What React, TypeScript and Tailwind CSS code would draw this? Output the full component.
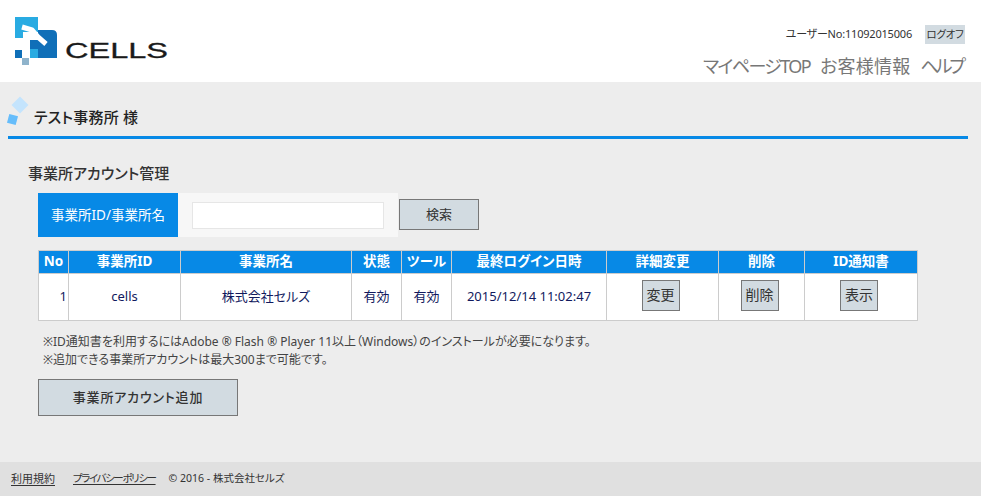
const jp = "font-['Noto_Sans','Noto_Sans_CJK_JP',sans-serif] [font-feature-settings:'palt']";

const columns = [
  { label: "No", width: "w-[30px]" },
  { label: "事業所ID", width: "w-[112px]" },
  { label: "事業所名", width: "w-[171px]" },
  { label: "状態", width: "w-[50px]" },
  { label: "ツール", width: "w-[50px]" },
  { label: "最終ログイン日時", width: "w-[155px]" },
  { label: "詳細変更", width: "w-[112px]" },
  { label: "削除", width: "w-[86px]" },
  { label: "ID通知書", width: "w-[113px]" },
];

function Logo() {
  return (
    <svg width="160" height="56" viewBox="0 0 160 56" className="block">
      <path d="M5 5H28V20H13V26H5Z" fill="#29abe2" />
      <path d="M28 18H42Q47 18 47 23V46H28Z" fill="#0f6fb8" />
      <path d="M20 28H28V37H20Z" fill="#0f6fb8" />
      <path d="M20 37H28V46H20Z" fill="#29abe2" />
      <path d="M5 38H12V46H5Z" fill="#0f6fb8" />
      <path d="M12 46H19V53H12Z" fill="#8fb3cb" />
      <path d="M12 15L22 18L28 25L36 32" fill="none" stroke="#fff" strokeWidth="5" strokeLinejoin="round" />
      <text
        x="55"
        y="46"
        textLength="103"
        lengthAdjust="spacingAndGlyphs"
        fontFamily="'Liberation Sans', sans-serif"
        fontSize="22"
        fill="#1a1a1a"
        stroke="#1a1a1a"
        strokeWidth="0.3"
      >
        CELLS
      </text>
    </svg>
  );
}

function SmallButton({ label }: { label: string }) {
  return (
    <button className="align-middle mr-[4px] mb-[4px] w-[38px] h-[31px] bg-[#d2dbe1] border border-[#777] text-[14px] text-[#333] leading-none">
      {label}
    </button>
  );
}

export default function App() {
  return (
    <div className={`${jp} w-[981px] h-[496px] flex flex-col bg-[#ededed] text-[#333] overflow-hidden`}>
      <header className="h-[82px] bg-white flex justify-between">
        <div className="pl-[10px] pt-[12px]">
          <Logo />
        </div>
        <div className="flex flex-col items-end pr-[16px] pt-[24px]">
          <div className="flex items-center gap-[13px] text-[11px] text-[#333] h-[20px]">
            <span className="tracking-[-0.2px]">ユーザーNo:11092015006</span>
            <button className="h-[19px] w-[40px] bg-[#d2dbe1] text-[10.5px] text-[#333] leading-none tracking-[-0.2px]">ログオフ</button>
          </div>
          <nav className="flex gap-[10px] mt-[9px] mr-[2px] text-[18px] leading-[26px] text-[#777]">
            <span className="tracking-[-1.6px]">マイページTOP</span>
            <span className="tracking-[0.2px]">お客様情報</span>
            <span className="tracking-[-3px]">ヘルプ</span>
          </nav>
        </div>
      </header>

      <main className="flex-1 px-[8px]">
        <div className="relative h-[57px] w-[960px] border-b-[3px] border-[#0789e6]">
          <span className="absolute left-[6px] top-[17px] w-[12px] h-[12px] rotate-45 bg-[#c4e4fd]" />
          <span className="absolute left-[0px] top-[33px] w-[9px] h-[9px] rotate-[15deg] bg-[#66bdfb]" />
          <h1 className="pl-[26px] pt-[24px] text-[15px] leading-[22px] font-medium text-[#222] tracking-[0.2px]">テスト事務所 様</h1>
        </div>

        <div className="pl-[20px] pt-[23px]">
          <h2 className="text-[15px] leading-[22px] font-medium text-[#333]">事業所アカウント管理</h2>

          <div className="ml-[10px] mt-[9px] flex items-start">
            <div className="flex h-[44px] w-[360px] bg-[#f7f7f7]">
              <div className="w-[140px] flex items-center justify-center bg-[#0789e6] text-white text-[13.5px]">
                事業所ID/事業所名
              </div>
              <div className="flex-1 flex items-center pl-[14px]">
                <input className="w-[192px] h-[27px] bg-white border border-[#e6e6e6] outline-none" />
              </div>
            </div>
            <button className="ml-[1px] mt-[6px] w-[80px] h-[31px] bg-[#d2dbe1] border border-[#777] text-[13px] text-[#333] leading-none">
              検索
            </button>
          </div>

          <table className="ml-[10px] mt-[13px] w-[880px] table-fixed border-collapse text-[13px] text-[#111a5e]">
            <thead>
              <tr className="h-[23px] bg-[#0789e6] text-white">
                {columns.map((col) => (
                  <th key={col.label} className={`${col.width} border border-[#cccccc] p-0 font-bold text-[13.5px] leading-none`}>
                    {col.label}
                  </th>
                ))}
              </tr>
            </thead>
            <tbody>
              <tr className="h-[47px] bg-white text-center">
                <td className="border border-[#cccccc] p-0 pr-[1px] text-right">1</td>
                <td className="border border-[#cccccc] p-0">cells</td>
                <td className="border border-[#cccccc] p-0">株式会社セルズ</td>
                <td className="border border-[#cccccc] p-0">有効</td>
                <td className="border border-[#cccccc] p-0">有効</td>
                <td className="border border-[#cccccc] p-0">2015/12/14 11:02:47</td>
                <td className="border border-[#cccccc] p-0"><SmallButton label="変更" /></td>
                <td className="border border-[#cccccc] p-0"><SmallButton label="削除" /></td>
                <td className="border border-[#cccccc] p-0"><SmallButton label="表示" /></td>
              </tr>
            </tbody>
          </table>

          <div className="ml-[15px] mt-[12px] text-[12px] leading-[18px] text-[#444]">
            <p>※ID通知書を利用するにはAdobe ® Flash ® Player 11以上（Windows）のインストールが必要になります。</p>
            <p>※追加できる事業所アカウントは最大300まで可能です。</p>
          </div>

          <button className="ml-[10px] mt-[10px] w-[200px] h-[37px] bg-[#d2dbe1] border border-[#777] text-[13px] text-[#333] font-medium tracking-[0.8px] leading-none">
            事業所アカウント追加
          </button>
        </div>
      </main>

      <footer className="h-[34px] bg-[#e0e0e0] flex items-center pl-[11px] text-[10.5px] text-[#333]">
        <a className="underline underline-offset-2 mr-[18px] text-[11px]">利用規約</a>
        <a className="underline underline-offset-2 mr-[13px] tracking-[-1.4px]">プライバシーポリシー</a>
        <span>© 2016 - 株式会社セルズ</span>
      </footer>
    </div>
  );
}
